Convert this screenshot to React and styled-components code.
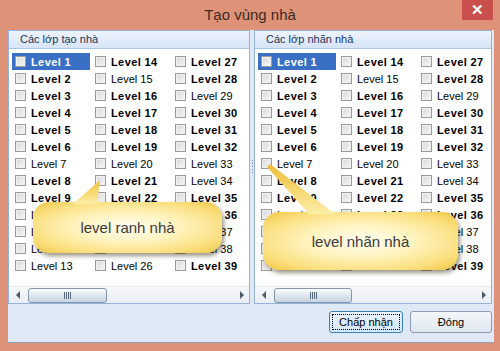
import React from 'react';
import styled, { createGlobalStyle } from 'styled-components';

const GlobalStyle = createGlobalStyle`
  html, body {
    margin: 0;
    padding: 0;
    background: #de9379;
  }
  * { box-sizing: border-box; }
`;

const BOLD = {
  left: [1, 2, 3, 4, 5, 6, 8, 9, 14, 16, 17, 18, 19, 21, 22, 23, 27, 28, 30, 31, 32, 35, 36, 39],
};

const Window = styled.div`
  width: 500px;
  height: 351px;
  background: #de9379;
  font-family: "Liberation Sans", Arial, sans-serif;
  display: flex;
  flex-direction: column;
`;

const TitleBar = styled.div`
  height: 30px;
  display: grid;
  grid-template-columns: 1fr auto 1fr;
  align-items: start;
`;

const Title = styled.div`
  grid-column: 2;
  font-size: 15px;
  color: #3b2a24;
  line-height: 30px;
`;

const CloseButton = styled.div`
  grid-column: 3;
  justify-self: end;
  margin-right: 7px;
  width: 31px;
  height: 20px;
  background: #c9504c;
  color: #fff;
  font-size: 15px;
  font-weight: bold;
  display: flex;
  align-items: center;
  justify-content: center;
`;

const Client = styled.div`
  margin-left: 8px;
  width: 486px;
  height: 313px;
  background: #dfe9f6;
  border-bottom: 1px solid #8e9fba;
  display: flex;
  flex-direction: column;
  position: relative;
`;

const Panels = styled.div`
  display: flex;
  height: 274px;
  padding-right: 2px;
`;

const Panel = styled.div`
  width: ${(p) => p.$w}px;
  height: 274px;
  border: 1px solid #93b2dc;
  display: flex;
  flex-direction: column;
  background: #fff;
`;

const PanelHeader = styled.div`
  height: 18px;
  background: linear-gradient(#eef4fd, #d6e4f7);
  border-bottom: 1px solid #aec6e6;
  color: #1d3557;
  font-size: 11px;
  line-height: 17px;
  padding-left: 11px;
`;

const List = styled.div`
  height: 237px;
  padding: 4px 0 0 3px;
  display: grid;
  grid-template-rows: repeat(13, 17px);
  grid-template-columns: repeat(3, 80px);
  grid-auto-flow: column;
`;

const Item = styled.div`
  display: flex;
  align-items: center;
  gap: 5px;
  padding-left: 3px;
  width: 78px;
  background: ${(p) => (p.$selected ? '#3a6fc6' : 'transparent')};
  color: ${(p) => (p.$selected ? '#fff' : '#000')};
  font-size: 11px;
  font-weight: ${(p) => (p.$bold ? 'bold' : 'normal')};
  letter-spacing: ${(p) => (p.$bold ? '0.4px' : '0')};
  white-space: nowrap;
`;

const Box = styled.span`
  width: 11px;
  height: 11px;
  flex: none;
  border: 1px solid #9a9a9a;
  background: linear-gradient(135deg, #d8d8d8, #f7f7f7);
  box-shadow: inset 0 0 0 1px #f2f2f2;
`;

const ScrollBar = styled.div`
  height: 17px;
  background: linear-gradient(#f6f8fb, #e9eef5);
  border-top: 1px solid #e4e9f0;
  display: flex;
  align-items: center;
  padding: 0 5px 0 7px;
`;

const Arrow = styled.span`
  width: 0;
  height: 0;
  border-top: 4px solid transparent;
  border-bottom: 4px solid transparent;
  ${(p) => (p.$dir === 'left' ? 'border-right: 4px solid #4d5a68;' : 'border-left: 4px solid #4d5a68;')}
`;

const Thumb = styled.div`
  margin-left: 8px;
  width: ${(p) => p.$w}px;
  height: 15px;
  border: 1px solid #8596ad;
  border-radius: 3px;
  background: linear-gradient(#fbfcfe, #dde5ef 55%, #c8d3e1);
  display: flex;
  align-items: center;
  justify-content: center;
  gap: 1px;
`;

const Grip = styled.span`
  width: 1px;
  height: 7px;
  background: #55667d;
`;

const Spacer = styled.div`
  flex: 1;
`;

const Splitter = styled.div`
  width: 4px;
  display: flex;
  align-items: center;
  justify-content: center;
  background: #dfe9f6;
`;

const SplitGrip = styled.div`
  width: 1px;
  height: 15px;
  background: repeating-linear-gradient(#6d87a8 0 1px, transparent 1px 3px);
`;

const BottomBar = styled.div`
  flex: 1;
  display: flex;
  justify-content: flex-end;
  align-items: flex-start;
  gap: 7px;
  padding: 7px 2px 0 0;
`;

const Button = styled.div`
  width: ${(p) => p.$w}px;
  height: 22px;
  border: 1px solid ${(p) => (p.$default ? '#3c7fb1' : '#8a9cb3')};
  border-radius: 3px;
  background: ${(p) =>
    p.$default ? 'linear-gradient(#eaf4fd, #d2e6fa)' : 'linear-gradient(#f4f7fb, #dfe6ef)'};
  font-size: 11px;
  color: #000;
  display: flex;
  align-items: center;
  justify-content: center;
  padding: 2px;
`;

const Focus = styled.span`
  flex: 1;
  align-self: stretch;
  border: 1px dotted #000;
  display: flex;
  align-items: center;
  justify-content: center;
`;

const Balloon = styled.div`
  position: absolute;
  left: ${(p) => p.$x}px;
  top: ${(p) => p.$y}px;
  width: ${(p) => p.$w}px;
  height: ${(p) => p.$h}px;
  border-radius: 16px;
  background: radial-gradient(ellipse at 50% 50%, #fffdf2 0%, #fff3bd 40%, #fbdf7e 75%, #f0c43e 100%);
  box-shadow: 2px 3px 4px rgba(60, 50, 20, 0.5);
  display: flex;
  align-items: center;
  justify-content: center;
  font-size: 15px;
  color: #3a3a3a;
`;

const Tail = styled.svg`
  position: absolute;
  left: 0;
  top: ${(p) => -p.$h + 2}px;
  overflow: visible;
`;

const BalloonText = styled.span`
  position: relative;
`;

function LevelList({ selected }) {
  const items = [];
  for (let i = 1; i <= 39; i++) {
    items.push(
      <Item key={i} $bold={BOLD.left.includes(i)} $selected={selected === i}>
        <Box />
        Level {i}
      </Item>
    );
  }
  return <List>{items}</List>;
}

function PanelBox({ title, width, thumb }) {
  return (
    <Panel $w={width}>
      <PanelHeader>{title}</PanelHeader>
      <LevelList selected={1} />
      <ScrollBar>
        <Arrow $dir="left" />
        <Thumb $w={thumb}>
          <Grip />
          <Grip />
          <Grip />
          <Grip />
        </Thumb>
        <Spacer />
        <Arrow $dir="right" />
      </ScrollBar>
    </Panel>
  );
}

export default function App() {
  return (
    <>
      <GlobalStyle />
      <Window>
        <TitleBar>
          <Title>Tạo vùng nhà</Title>
          <CloseButton>✕</CloseButton>
        </TitleBar>
        <Client>
          <Panels>
            <PanelBox title="Các lớp tạo nhà" width={242} thumb={79} />
            <Splitter>
              <SplitGrip />
            </Splitter>
            <PanelBox title="Các lớp nhãn nhà" width={238} thumb={78} />
          </Panels>
          <BottomBar>
            <Button $w={74} $default>
              <Focus>Chấp nhận</Focus>
            </Button>
            <Button $w={82}>Đóng</Button>
          </BottomBar>

          <Balloon $x={25} $y={172} $w={189} $h={51}>
            <Tail $h={24} width="80" height="24">
              <defs>
                <linearGradient id="t1" x1="0" y1="1" x2="0" y2="0">
                  <stop offset="0" stopColor="#fdeea6" />
                  <stop offset="1" stopColor="#f0c23c" />
                </linearGradient>
              </defs>
              <polygon points="40,24 64,24 67,0" fill="url(#t1)" />
            </Tail>
            <BalloonText>level ranh nhà</BalloonText>
          </Balloon>

          <Balloon $x={255} $y={182} $w={195} $h={58}>
            <Tail $h={52} width="80" height="52">
              <defs>
                <linearGradient id="t2" x1="0" y1="1" x2="0" y2="0">
                  <stop offset="0" stopColor="#fdeea6" />
                  <stop offset="1" stopColor="#eebd36" />
                </linearGradient>
              </defs>
              <polygon points="46,52 72,52 7,2 4,5" fill="url(#t2)" />
            </Tail>
            <BalloonText>level nhãn nhà</BalloonText>
          </Balloon>
        </Client>
      </Window>
    </>
  );
}
